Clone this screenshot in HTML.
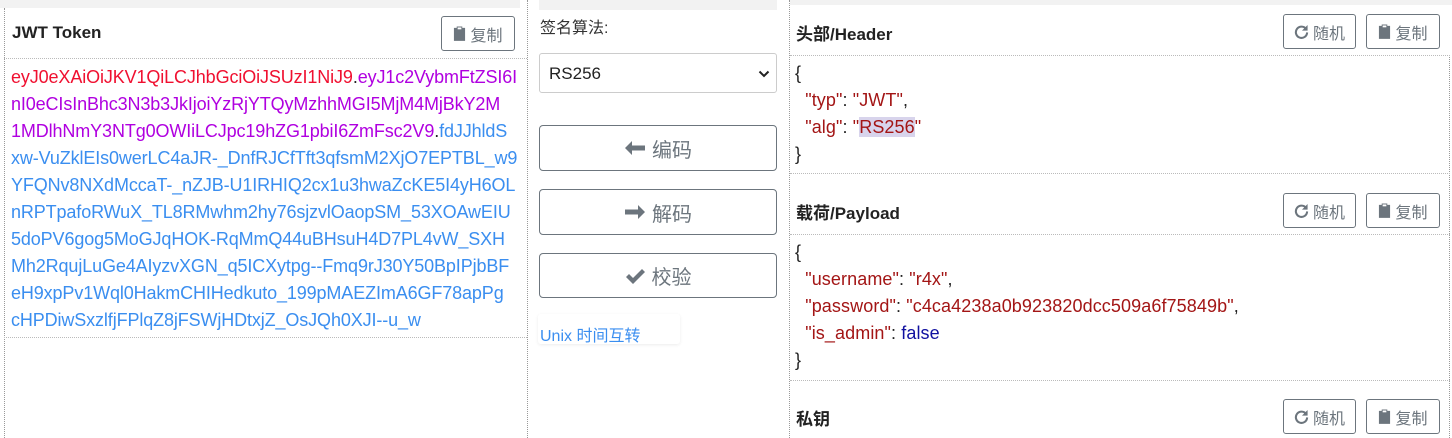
<!DOCTYPE html>
<html><head><meta charset="utf-8"><style>
*{box-sizing:border-box;margin:0;padding:0}
body{width:1452px;height:438px;overflow:hidden;background:#fff;font-family:"Liberation Sans","Noto Sans CJK SC",sans-serif;position:relative;color:#222}
.a{position:absolute}
.strip{background:#f2f2f2}
.vd{border-left:1px dotted #999}
.hd{border-top:1px dotted #bbb}
.btn{position:absolute;border:1px solid #6c757d;border-radius:3px;color:#6c757d;font-size:16px;display:flex;align-items:center;justify-content:center;gap:4px;background:#fff}
.title{position:absolute;font-weight:bold;font-size:17px;color:#222}
.tok{position:absolute;left:11px;top:64px;font-size:18px;line-height:27px;white-space:nowrap;letter-spacing:-0.12px}
.r{color:#f01030}.p{color:#b000e0}.b{color:#3a8ef0}
.mb{position:absolute;left:539px;width:238px;border:1px solid #6c757d;border-radius:4px;font-size:20px;color:#6c757d;display:flex;align-items:center;justify-content:center;gap:6px}
.js{position:absolute;left:795px;font-size:18px;line-height:27px;white-space:pre;color:#222;letter-spacing:0.1px}
.k{color:#a31515}.n{color:#1010a0}
</style></head><body>
<svg width="0" height="0" style="position:absolute"><defs>
<symbol id="clip" viewBox="0 0 14 16"><path d="M1 2h3v-1.5h6v1.5h3v14h-12z" fill="#6c757d"/><rect x="5" y="1.5" width="4" height="2" fill="#fff"/></symbol>
<symbol id="rot" viewBox="0 0 16 16"><path d="M13 5.5A6 6 0 1 0 14 9" fill="none" stroke="#6c757d" stroke-width="2.2"/><path d="M14.5 1v6h-6z" fill="#6c757d"/></symbol>
</defs></svg>

<!-- left -->
<div class="a strip" style="left:0;top:0;width:520px;height:8px"></div>
<div class="a vd" style="left:4px;top:8px;height:430px"></div>
<div class="a vd" style="left:527px;top:0;height:438px"></div>
<div class="title" style="left:12px;top:23px">JWT Token</div>
<div class="btn" style="left:441px;top:16px;width:74px;height:35px"><svg width="13" height="15"><use href="#clip"/></svg>复制</div>
<div class="a hd" style="left:4px;top:58px;width:523px"></div>
<div class="tok"><span class="r">eyJ0eXAiOiJKV1QiLCJhbGciOiJSUzI1NiJ9</span>.<span class="p">eyJ1c2VybmFtZSI6I</span><br><span class="p">nI0eCIsInBhc3N3b3JkIjoiYzRjYTQyMzhhMGI5MjM4MjBkY2M</span><br><span class="p">1MDlhNmY3NTg0OWIiLCJpc19hZG1pbiI6ZmFsc2V9</span>.<span class="b">fdJJhldS</span><br><span class="b">xw-VuZklEIs0werLC4aJR-_DnfRJCfTft3qfsmM2XjO7EPTBL_w9</span><br><span class="b">YFQNv8NXdMccaT-_nZJB-U1IRHIQ2cx1u3hwaZcKE5I4yH6OL</span><br><span class="b">nRPTpafoRWuX_TL8RMwhm2hy76sjzvlOaopSM_53XOAwEIU</span><br><span class="b">5doPV6gog5MoGJqHOK-RqMmQ44uBHsuH4D7PL4vW_SXH</span><br><span class="b">Mh2RqujLuGe4AIyzvXGN_q5ICXytpg--Fmq9rJ30Y50BpIPjbBF</span><br><span class="b">eH9xpPv1Wql0HakmCHIHedkuto_199pMAEZImA6GF78apPg</span><br><span class="b">cHPDiwSxzlfjFPlqZ8jFSWjHDtxjZ_OsJQh0XJI--u_w</span></div>
<div class="a hd" style="left:4px;top:337px;width:523px"></div>

<!-- middle -->
<div class="a strip" style="left:539px;top:0;width:238px;height:10px"></div>
<div class="a" style="left:540px;top:14px;font-size:16px;color:#333">签名算法:</div>
<div class="a" style="left:539px;top:53px;width:238px;height:40px;border:1px solid #ccc;border-radius:3px;font-size:17px;color:#222;padding:10px 0 0 9px">RS256
<svg class="a" style="right:6px;top:15px" width="12" height="10"><path d="M1.5 2.5l4.5 4.5l4.5-4.5" fill="none" stroke="#222" stroke-width="2"/></svg></div>
<div class="mb" style="top:125px;height:46px"><svg width="22" height="16"><path d="M1 8l7-7v4.5h13v5h-13v4.5z" fill="#6c757d"/></svg>编码</div>
<div class="mb" style="top:189px;height:46px"><svg width="22" height="16"><path d="M21 8l-7-7v4.5h-13v5h13v4.5z" fill="#6c757d"/></svg>解码</div>
<div class="mb" style="top:253px;height:45px"><svg width="21" height="16"><path d="M1 9l3-3l4 4l9-9l3 3l-12 12z" fill="#6c757d"/></svg>校验</div>
<div class="a" style="left:538px;top:314px;width:142px;height:30px;box-shadow:0 1px 3px rgba(0,0,0,.08);border-radius:3px"></div>
<div class="a" style="left:540px;top:322px;font-size:16px;color:#3a8ef0">Unix 时间互转</div>

<!-- right -->
<div class="a strip" style="left:790px;top:0;width:662px;height:5px"></div>
<div class="a vd" style="left:789px;top:0;height:438px"></div>
<div class="a vd" style="left:1449px;top:55px;height:383px"></div>
<div class="title" style="left:796px;top:20px">头部/Header</div>
<div class="btn" style="left:1283px;top:14px;width:73px;height:35px"><svg width="15" height="15"><use href="#rot"/></svg>随机</div>
<div class="btn" style="left:1366px;top:14px;width:74px;height:35px"><svg width="13" height="15"><use href="#clip"/></svg>复制</div>
<div class="a hd" style="left:790px;top:55px;width:660px"></div>
<div class="js" style="top:60px">{
  <span class="k">"typ"</span>: <span class="k">"JWT"</span>,
  <span class="k">"alg"</span>: <span class="k">"<span style="background:#d8d4ec">RS256</span>"</span>
}</div>
<div class="a hd" style="left:790px;top:173px;width:660px"></div>
<div class="title" style="left:796px;top:199px">载荷/Payload</div>
<div class="btn" style="left:1283px;top:193px;width:73px;height:35px"><svg width="15" height="15"><use href="#rot"/></svg>随机</div>
<div class="btn" style="left:1366px;top:193px;width:74px;height:35px"><svg width="13" height="15"><use href="#clip"/></svg>复制</div>
<div class="a hd" style="left:790px;top:234px;width:660px"></div>
<div class="js" style="top:239px">{
  <span class="k">"username"</span>: <span class="k">"r4x"</span>,
  <span class="k">"password"</span>: <span class="k">"c4ca4238a0b923820dcc509a6f75849b"</span>,
  <span class="k">"is_admin"</span>: <span class="n">false</span>
}</div>
<div class="a hd" style="left:790px;top:380px;width:660px"></div>
<div class="title" style="left:796px;top:405px">私钥</div>
<div class="btn" style="left:1283px;top:399px;width:73px;height:35px"><svg width="15" height="15"><use href="#rot"/></svg>随机</div>
<div class="btn" style="left:1366px;top:399px;width:74px;height:35px"><svg width="13" height="15"><use href="#clip"/></svg>复制</div>
</body></html>
